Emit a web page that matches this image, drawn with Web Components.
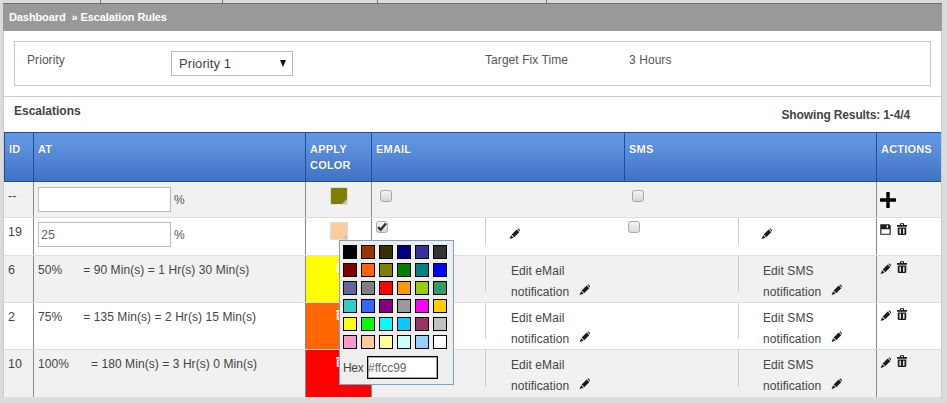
<!DOCTYPE html>
<html>
<head>
<meta charset="utf-8">
<title>Escalation Rules</title>
<style>
html, body { margin: 0; padding: 0; }
body {
  width: 947px;
  height: 403px;
  overflow: hidden;
  background: #fff;
  font: 12px "Liberation Sans", Arial, sans-serif;
  letter-spacing: 0.07px;
  color: #444;
}
</style>
</head>
<body>
<esc-page>
  <crumb-bar></crumb-bar>
  <priority-panel></priority-panel>
  <section-title></section-title>
  <esc-head></esc-head>

  <esc-row h="36" shade>
    <span slot="id">--</span>
    <span slot="at"><at-input></at-input></span>
    <color-swatch slot="color" color="#808000"></color-swatch>
    <esc-check slot="email" class="add"></esc-check>
    <esc-check slot="sms" class="add"></esc-check>
    <esc-icon slot="actions" name="plus" size="16" class="add"></esc-icon>
  </esc-row>

  <esc-row h="38" inner>
    <span slot="id">19</span>
    <span slot="at"><at-input value="25" class="up"></at-input></span>
    <color-swatch slot="color" color="#ffcc99" class="up"></color-swatch>
    <esc-check slot="email" checked></esc-check>
    <esc-icon slot="emailedit" name="pencil" class="lone"></esc-icon>
    <esc-check slot="sms"></esc-check>
    <esc-icon slot="smsedit" name="pencil" class="lone"></esc-icon>
    <esc-icon slot="actions" name="save"></esc-icon>
    <esc-icon slot="actions" name="trash"></esc-icon>
  </esc-row>

  <esc-row h="47" shade inner fill="#ffff00">
    <span slot="id">6</span>
    <at-text slot="at" pct="50%" gap="21">= 90 Min(s) = 1 Hr(s) 30 Min(s)</at-text>
    <esc-icon slot="color" name="trash" class="ghost"></esc-icon>
    <edit-link slot="emailedit">Edit eMail</edit-link>
    <edit-link slot="smsedit">Edit SMS</edit-link>
    <esc-icon slot="actions" name="pencil"></esc-icon>
    <esc-icon slot="actions" name="trash"></esc-icon>
  </esc-row>

  <esc-row h="47" inner fill="#ff6600">
    <span slot="id">2</span>
    <at-text slot="at" pct="75%" gap="21">= 135 Min(s) = 2 Hr(s) 15 Min(s)</at-text>
    <esc-icon slot="color" name="trash" class="ghost"></esc-icon>
    <edit-link slot="emailedit">Edit eMail</edit-link>
    <edit-link slot="smsedit">Edit SMS</edit-link>
    <esc-icon slot="actions" name="pencil"></esc-icon>
    <esc-icon slot="actions" name="trash"></esc-icon>
  </esc-row>

  <esc-row h="48" shade inner fill="#ff0000">
    <span slot="id">10</span>
    <at-text slot="at" pct="100%" gap="22">= 180 Min(s) = 3 Hr(s) 0 Min(s)</at-text>
    <esc-icon slot="color" name="trash" class="ghost"></esc-icon>
    <edit-link slot="emailedit">Edit eMail</edit-link>
    <edit-link slot="smsedit">Edit SMS</edit-link>
    <esc-icon slot="actions" name="pencil"></esc-icon>
    <esc-icon slot="actions" name="trash"></esc-icon>
  </esc-row>

  <color-popup slot="over"></color-popup>
</esc-page>

<script>
const ICONS = {
  pencil: '<path d="M2.9 7.2 8.4 1.7l2.8 2.8-5.5 5.5zM9.2 1l.3-.3c.3-.3.8-.3 1.1 0l1.6 1.6c.3.3.3.8 0 1.1l-.3.3zM2.3 7.9l2.7 2.7L.6 12z"/>',
  trash: '<path d="M3.6.2h4.8v1.7H12v1.9H0V1.9h3.6zM5 1.1v.8h2v-.8z" fill-rule="evenodd"/><path d="M.9 4.6h10.2v6.2c0 .7-.5 1.2-1.2 1.2H2.1c-.7 0-1.2-.5-1.2-1.2zM3 5.8v5h1.7v-5zM7.3 5.8v5H9v-5z" fill-rule="evenodd"/>',
  save: '<path d="M.3.3h9.9l1.5 1.5v9.9H.3zM7.2 1.6v2.4h1.6V1.6zM1.5 5.8v4.7h9V5.8z" fill-rule="evenodd"/>',
  plus: '<path d="M4.7 0h2.6v4.7H12v2.6H7.3V12H4.7V7.3H0V4.7h4.7z"/>',
};

// every element below is: template -> open shadow root
function shadow(el, html) {
  el.attachShadow({ mode: "open" }).innerHTML = html;
}

class EscPage extends HTMLElement {
  constructor() {
    super();
    shadow(this, `
      <style>
        :host {
          display: block;
          position: relative;
          width: 947px;
          height: 403px;
          box-sizing: border-box;
          padding: 0 5px 0 3px;
          background-color: #fff;
          background-image: radial-gradient(#d8d8d8 0.7px, transparent 0.8px);
          background-size: 2px 2px;
        }
        .ticks { display: flex; height: 3px; margin-left: -3px; }
        .ticks i { border-right: 1px solid #777; height: 3px; box-sizing: border-box; }
        .panel {
          background: #fff;
          height: 396px;
          box-sizing: border-box;
          border-bottom: 1px solid #ddd;
          border-left: 1px solid #ccc;
          border-right: 1px solid #ccc;
        }
        .over { position: absolute; left: 339px; top: 240px; }
      </style>
      <div class="ticks">
        <i style="width:101px"></i><i style="width:122px"></i><i style="width:155px"></i><i style="width:169px"></i>
      </div>
      <div class="panel"><slot></slot></div>
      <div class="over"><slot name="over"></slot></div>`);
  }
}

class CrumbBar extends HTMLElement {
  constructor() {
    super();
    shadow(this, `
      <style>
        :host {
          display: flex;
          align-items: center;
          margin-left: -1px;
          margin-right: -1px;
          height: 28px;
          box-sizing: border-box;
          padding: 0 0 1px 6px;
          background: #999;
          border-top: 1px solid #6f6f6f;
          color: #fff;
          font-weight: bold;
          font-size: 11px;
          letter-spacing: -0.1px;
          white-space: pre;
        }
      </style>
      <span>Dashboard</span><span>  » Escalation Rules</span>`);
  }
}

class PriorityPanel extends HTMLElement {
  constructor() {
    super();
    shadow(this, `
      <style>
        :host {
          display: block;
          padding: 10px 10px 10px 10px;
          border-bottom: 1px solid #ccc;
          height: 45px;
        }
        .box {
          display: grid;
          grid-template-columns: 144px 314px 144px 1fr;
          height: 45px;
          box-sizing: border-box;
          padding: 0 0 0 12px;
          border: 1px solid #c8c8c8;
          color: #555;
        }
        .label { padding-top: 11px; line-height: 14px; }
        .sel {
          margin-top: 9px;
          width: 122px;
          height: 25px;
          box-sizing: border-box;
          border: 1px solid #bbb;
          display: flex;
          align-items: center;
          justify-content: space-between;
          padding: 0 6px 0 7px;
          font-size: 13px;
          color: #444;
        }
        .sel b {
          width: 0;
          height: 0;
          margin-top: -1px;
          border-style: solid;
          border-width: 7px 3.5px 0;
          border-color: #111 transparent transparent;
        }
      </style>
      <div class="box">
        <div class="label">Priority</div>
        <div><div class="sel"><span>Priority 1</span><b></b></div></div>
        <div class="label">Target Fix Time</div>
        <div class="label">3 Hours</div>
      </div>`);
  }
}

class SectionTitle extends HTMLElement {
  constructor() {
    super();
    shadow(this, `
      <style>
        :host {
          display: flex;
          justify-content: space-between;
          height: 35px;
          box-sizing: border-box;
          padding: 7px 31px 0 10px;
          font-weight: bold;
          letter-spacing: 0;
          color: #444;
        }
        .r { padding-top: 4px; letter-spacing: -0.13px; }
      </style>
      <div>Escalations</div>
      <div class="r">Showing Results: 1-4/4</div>`);
  }
}

const COLS = "29px 272px 66px 114px 139px 114px 138px 65px";

class EscHead extends HTMLElement {
  constructor() {
    super();
    shadow(this, `
      <style>
        :host {
          display: grid;
          grid-template-columns: 29px 272px 66px 253px 252px 65px;
          height: 50px;
          box-sizing: border-box;
          border-top: 1px solid #1f4f99;
          border-bottom: 1px solid #1f4f99;
          background: linear-gradient(#6096e2 0%, #5c90dd 30%, #3f72c4 100%);
          color: #fff;
          font-weight: bold;
          font-size: 11px;
          line-height: 16px;
          letter-spacing: 0.2px;
          text-shadow: 0 0 1px rgba(20, 50, 110, .6);
        }
        div { padding: 8px 0 0 4px; box-sizing: border-box; border-left: 1px solid #1f4f99; }
        div:first-child { border-left: 0; }
      </style>
      <div>ID</div><div>AT</div><div>APPLY<br>COLOR</div><div>EMAIL</div><div>SMS</div><div>ACTIONS</div>`);
  }
}

class EscRow extends HTMLElement {
  constructor() {
    super();
    const h = this.getAttribute("h");
    const fill = this.getAttribute("fill") || "transparent";
    const inner = this.hasAttribute("inner") ? "#ccc" : "transparent";
    shadow(this, `
      <style>
        :host {
          display: grid;
          grid-template-columns: ${COLS};
          grid-template-rows: ${h - 1}px;
          height: ${h}px;
          box-sizing: border-box;
          border-bottom: 1px solid #ddd;
          background: ${this.hasAttribute("shade") ? "#f1f1f1" : "#fff"};
          color: #444;
        }
        .c { box-sizing: border-box; line-height: 16px; }
        .id { padding: 6px 0 0 4px; font-size: 12.5px; }
        .at { border-left: 1px solid #888; padding: 5px 0 0 4px; }
        .color { border-left: 1px solid #888; background: ${fill}; display: flex; justify-content: center; padding-top: 5px; }
        .left { border-left: 1px solid #888; padding: 3px 0 0 4px; }
        .sub { border-left: 1px solid ${inner}; margin-bottom: 10px; padding: 0 0 0 25px; }
        .sub.s { padding-left: 24px; }
        .sms { padding: 3px 0 0 4px; }
        .act { border-left: 1px solid #888; padding: 5px 0 0 3px; display: flex; gap: 6px; align-items: flex-start; }
      </style>
      <div class="c id"><slot name="id"></slot></div>
      <div class="c at"><slot name="at"></slot></div>
      <div class="c color"><slot name="color"></slot></div>
      <div class="c left"><slot name="email"></slot></div>
      <div class="c sub"><slot name="emailedit"></slot></div>
      <div class="c sms"><slot name="sms"></slot></div>
      <div class="c sub s"><slot name="smsedit"></slot></div>
      <div class="c act"><slot name="actions"></slot></div>`);
  }
}

class AtInput extends HTMLElement {
  constructor() {
    super();
    shadow(this, `
      <style>
        :host { display: flex; align-items: center; gap: 3px; margin-top: ${this.classList.contains("up") ? -1 : 0}px; }
        input {
          width: 133px;
          height: 25px;
          box-sizing: border-box;
          border: 1px solid #bbb;
          padding: 1px 2px 0;
          margin: 0;
          background: #fff;
          font: 12.5px "Liberation Sans", Arial, sans-serif;
          color: #666;
          outline: none;
        }
        span { color: #555; }
      </style>
      <input value="${this.getAttribute("value") || ""}"><span>%</span>`);
  }
}

class AtText extends HTMLElement {
  constructor() {
    super();
    shadow(this, `
      <style>
        :host { display: flex; gap: ${this.getAttribute("gap")}px; padding-top: 1px; white-space: nowrap; }
      </style>
      <span>${this.getAttribute("pct")}</span><span><slot></slot></span>`);
  }
}

class ColorSwatch extends HTMLElement {
  constructor() {
    super();
    shadow(this, `
      <style>
        :host {
          display: block;
          position: relative;
          width: 18px;
          height: 18px;
          box-sizing: border-box;
          border: 1px solid #ddd;
          background: ${this.getAttribute("color")};
          margin-top: ${this.classList.contains("up") ? -1 : 0}px;
        }
        i {
          position: absolute;
          right: 0;
          bottom: 0;
          border-style: solid;
          border-width: 0 0 5px 5px;
          border-color: transparent transparent #c4c4c4 transparent;
        }
      </style>
      <i></i>`);
  }
}

class EscCheck extends HTMLElement {
  constructor() {
    super();
    const tick = this.hasAttribute("checked")
      ? '<svg width="10" height="10" viewBox="0 0 9 9"><path d="M1 4.6 3.4 7 8 1.4" fill="none" stroke="#333" stroke-width="2.2"/></svg>'
      : "";
    const add = this.classList.contains("add");
    shadow(this, `
      <style>
        :host {
          display: flex;
          align-items: center;
          justify-content: center;
          width: 12px;
          height: 12px;
          box-sizing: border-box;
          border: 1px solid #a8a8a8;
          border-radius: 3px;
          background: linear-gradient(#f4f4f4, #d9d9d9);
          ${add ? "margin: 5px 0 0 4px;" : ""}
        }
      </style>
      ${tick}`);
  }
}

class EscIcon extends HTMLElement {
  constructor() {
    super();
    const name = this.getAttribute("name");
    const size = this.getAttribute("size") || (name == "trash" ? 12 : 11);
    const width = name == "trash" ? 10 : size;
    const ghost = this.classList.contains("ghost");
    const lone = this.classList.contains("lone");
    const add = this.classList.contains("add");
    // pencil and save sit a little lower than the trash can next to them
    let top = name == "pencil" ? 2 : name == "save" ? 1 : 0;
    if (lone) top = 10;
    if (add) top = 5;
    if (ghost) top = 0;
    shadow(this, `
      <style>
        :host {
          display: inline-block;
          width: ${width}px;
          height: ${size}px;
          margin-top: ${top}px;
          color: ${ghost ? "#fff" : add ? "#000" : "#1c1c1c"};
          ${lone ? "margin-left: -2px;" : ""}
          ${ghost ? "margin-left: 4px;" : ""}
        }
        svg { display: block; fill: currentColor; }
      </style>
      <svg width="${width}" height="${size}" viewBox="0 0 12 12" preserveAspectRatio="none">${ICONS[name]}</svg>`);
  }
}

class EditLink extends HTMLElement {
  constructor() {
    super();
    shadow(this, `
      <style>
        :host { display: block; line-height: 21px; padding-top: 5px; color: #444; }
        .line { display: flex; align-items: flex-start; gap: 10px; }
      </style>
      <div><slot></slot></div>
      <div class="line"><span>notification</span><esc-icon name="pencil"></esc-icon></div>`);
  }
}

const PALETTE = [
  "#000000", "#993300", "#333300", "#000080", "#333399", "#333333",
  "#800000", "#ff6600", "#808000", "#008000", "#008080", "#0000ff",
  "#666699", "#808080", "#ff0000", "#ff9900", "#99cc00", "#339966",
  "#33cccc", "#3366ff", "#800080", "#999999", "#ff00ff", "#ffcc00",
  "#ffff00", "#00ff00", "#00ffff", "#00ccff", "#993366", "#c0c0c0",
  "#ff99cc", "#ffcc99", "#ffff99", "#ccffff", "#99ccff", "#ffffff",
];

class ColorPopup extends HTMLElement {
  constructor() {
    super();
    const cells = PALETTE.map((c) => `<i style="background:${c}"></i>`).join("");
    shadow(this, `
      <style>
        :host {
          display: block;
          width: 115px;
          height: 145px;
          box-sizing: border-box;
          padding: 4px 3px 0;
          background: #eee;
          border: 1px solid #7f9fc9;
        }
        .grid { display: grid; grid-template-columns: repeat(6, 14px); grid-auto-rows: 14px; gap: 4px; }
        i { display: block; box-sizing: border-box; border: 1px solid #000; }
        .hex { display: flex; align-items: center; margin-top: 7px; color: #444; }
        .hex span { width: 24px; letter-spacing: -0.3px; }
        input {
          width: 71px;
          height: 23px;
          box-sizing: border-box;
          border: 1px solid #000;
          box-shadow: inset 0 0 0 1px rgba(0, 0, 0, .35);
          padding: 0;
          margin: 0;
          background: #fff;
          font: 12px "Liberation Sans", Arial, sans-serif;
          color: #666;
          outline: none;
        }
      </style>
      <div class="grid">${cells}</div>
      <div class="hex"><span>Hex</span><input value="#ffcc99"></div>`);
  }
}

customElements.define("esc-icon", EscIcon);
customElements.define("esc-page", EscPage);
customElements.define("crumb-bar", CrumbBar);
customElements.define("priority-panel", PriorityPanel);
customElements.define("section-title", SectionTitle);
customElements.define("esc-head", EscHead);
customElements.define("esc-row", EscRow);
customElements.define("at-input", AtInput);
customElements.define("at-text", AtText);
customElements.define("color-swatch", ColorSwatch);
customElements.define("esc-check", EscCheck);
customElements.define("edit-link", EditLink);
customElements.define("color-popup", ColorPopup);
</script>
</body>
</html>
